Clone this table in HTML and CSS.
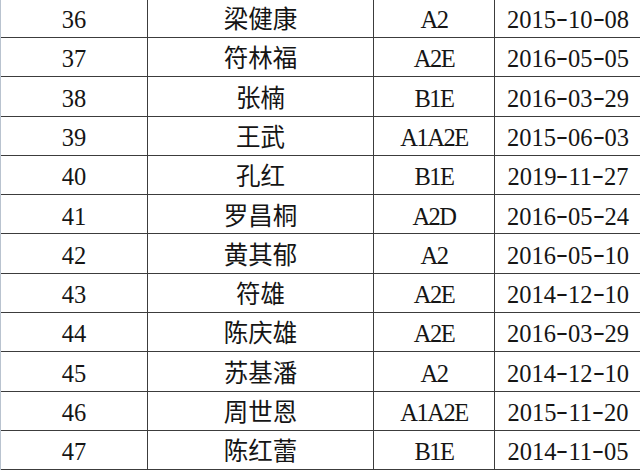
FILE: index.html
```html
<!DOCTYPE html>
<html lang="zh-CN">
<head>
<meta charset="utf-8">
<title>驾驶证名单</title>
<link rel="stylesheet" href="styles.css">
</head>
<body>
<div class="sheet">
  <div class="cell">36</div><div class="cell">梁健康</div><div class="cell cls">A2</div><div class="cell">2015<span class="dash">-</span>10<span class="dash">-</span>08</div>
  <div class="cell">37</div><div class="cell">符林福</div><div class="cell cls">A2E</div><div class="cell">2016<span class="dash">-</span>05<span class="dash">-</span>05</div>
  <div class="cell">38</div><div class="cell">张楠</div><div class="cell cls">B1E</div><div class="cell">2016<span class="dash">-</span>03<span class="dash">-</span>29</div>
  <div class="cell">39</div><div class="cell">王武</div><div class="cell cls">A1A2E</div><div class="cell">2015<span class="dash">-</span>06<span class="dash">-</span>03</div>
  <div class="cell">40</div><div class="cell">孔红</div><div class="cell cls">B1E</div><div class="cell">2019<span class="dash">-</span>11<span class="dash">-</span>27</div>
  <div class="cell">41</div><div class="cell">罗昌桐</div><div class="cell cls">A2D</div><div class="cell">2016<span class="dash">-</span>05<span class="dash">-</span>24</div>
  <div class="cell">42</div><div class="cell">黄其郁</div><div class="cell cls">A2</div><div class="cell">2016<span class="dash">-</span>05<span class="dash">-</span>10</div>
  <div class="cell">43</div><div class="cell">符雄</div><div class="cell cls">A2E</div><div class="cell">2014<span class="dash">-</span>12<span class="dash">-</span>10</div>
  <div class="cell">44</div><div class="cell">陈庆雄</div><div class="cell cls">A2E</div><div class="cell">2016<span class="dash">-</span>03<span class="dash">-</span>29</div>
  <div class="cell">45</div><div class="cell">苏基潘</div><div class="cell cls">A2</div><div class="cell">2014<span class="dash">-</span>12<span class="dash">-</span>10</div>
  <div class="cell">46</div><div class="cell">周世恩</div><div class="cell cls">A1A2E</div><div class="cell">2015<span class="dash">-</span>11<span class="dash">-</span>20</div>
  <div class="cell">47</div><div class="cell">陈红蕾</div><div class="cell cls">B1E</div><div class="cell">2014<span class="dash">-</span>11<span class="dash">-</span>05</div>
</div>
</body>
</html>
```

FILE: styles.css
```css
html, body {
  margin: 0;
  padding: 0;
  background: #ffffff;
  overflow: hidden;
}

.sheet {
  display: grid;
  grid-template-columns: 147px 226px 121px 146px;
  grid-auto-rows: 39.3px;
  margin-top: -1.3px;
  border-left: 1px solid #b9c3cf;
  font-family: "Liberation Serif", "Noto Sans CJK SC", serif;
  font-size: 24.5px;
  line-height: 1;
  color: #151515;
}

.cell {
  box-sizing: border-box;
  display: flex;
  align-items: center;
  justify-content: center;
  padding-top: 5px;
  border-right: 1px solid #3c3c3c;
  border-bottom: 1px solid #3c3c3c;
  white-space: nowrap;
}

.cell:nth-child(4n) {
  border-right: none;
}

.cls {
  letter-spacing: -1.5px;
}

.dash {
  display: inline-block;
  width: 12px;
  text-align: center;
  transform: translateY(-2px) scaleX(1.45);
}
```
